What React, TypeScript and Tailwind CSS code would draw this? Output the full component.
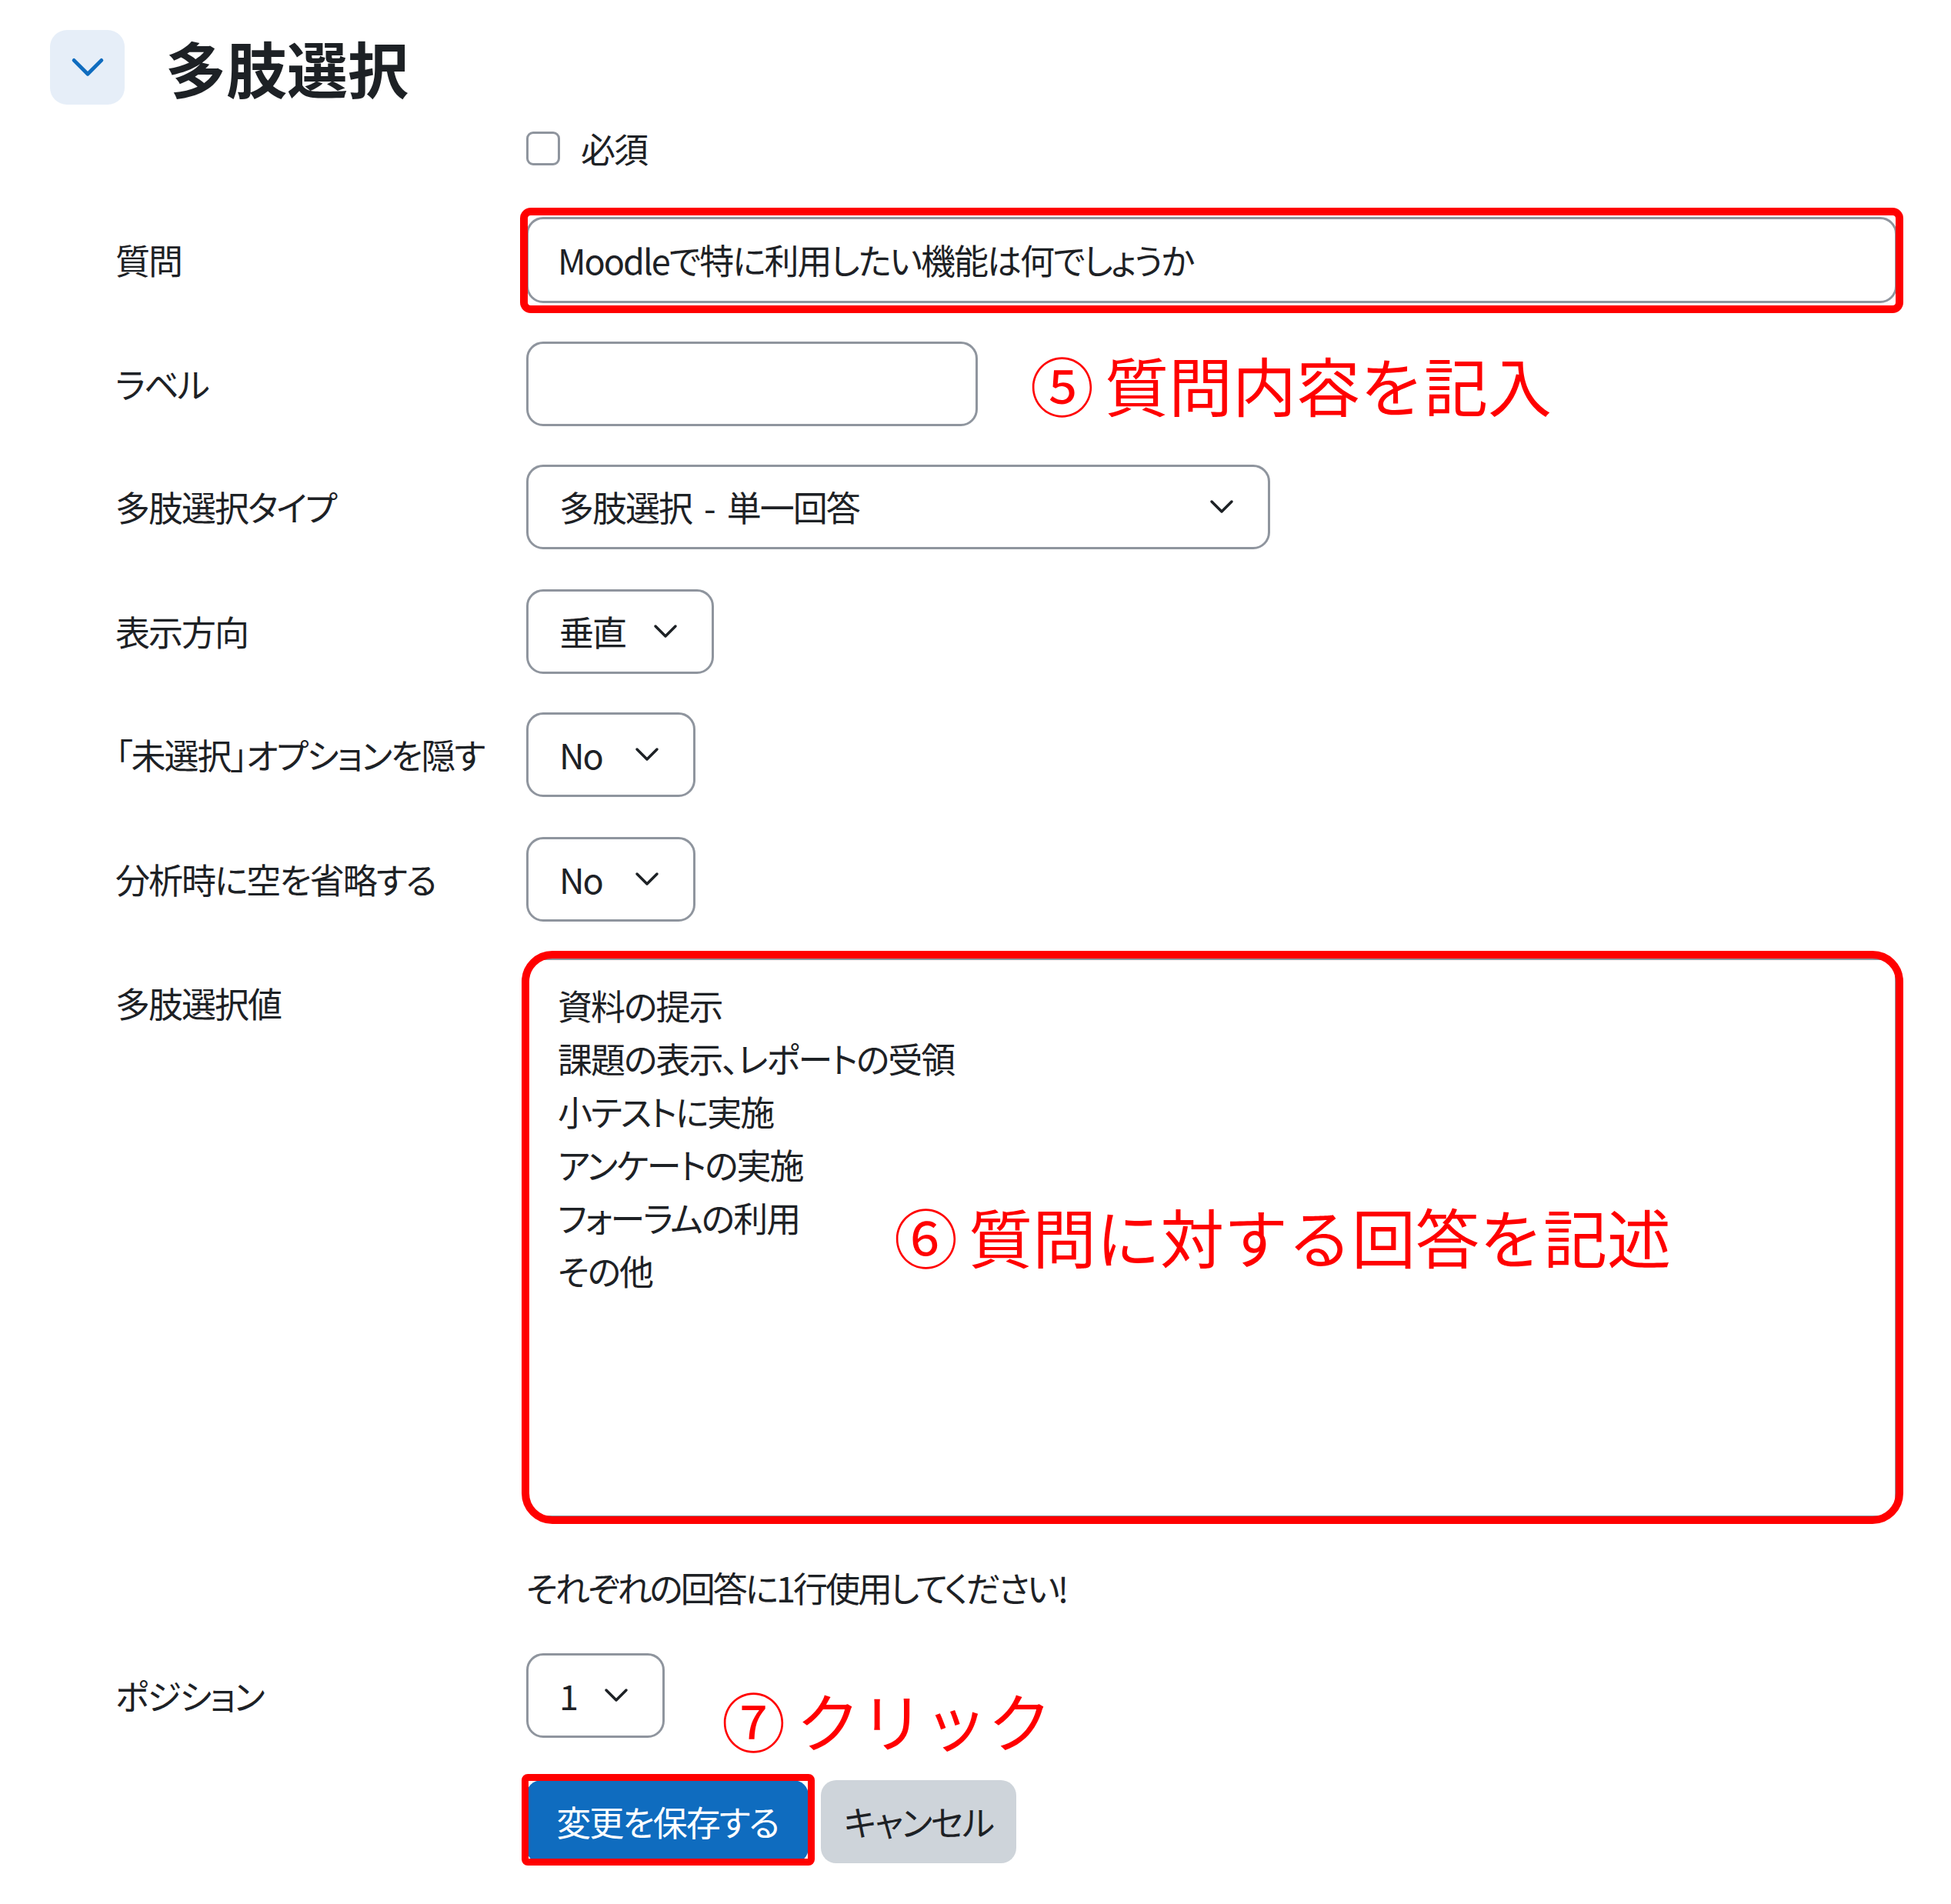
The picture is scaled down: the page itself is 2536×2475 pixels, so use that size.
import type { ReactNode } from "react";

function Chevron({ className }: { className?: string }) {
  return (
    <svg
      viewBox="0 0 32 20"
      className={className}
      fill="none"
      stroke="currentColor"
      strokeWidth={3.5}
      strokeLinecap="round"
      strokeLinejoin="round"
    >
      <polyline points="3,3 16,16 29,3" />
    </svg>
  );
}

function Select({ value, width }: { value: ReactNode; width: string }) {
  return (
    <div
      className={`flex h-[110px] ${width} items-center rounded-[22px] border-[3px] border-[#8f959e] bg-white pl-[40px] pr-[44px]`}
    >
      <span>{value}</span>
      <Chevron className="ml-auto h-[20px] w-[32px] text-[#1d2125]" />
    </div>
  );
}

function Row({
  label,
  children,
  className = "",
}: {
  label: string;
  children: ReactNode;
  className?: string;
}) {
  return (
    <div className={`grid grid-cols-[534px_1fr] items-center ${className}`}>
      <div>{label}</div>
      <div className="flex items-center">{children}</div>
    </div>
  );
}

const choices = [
  "資料の提示",
  "課題の表示、レポートの受領",
  "小テストに実施",
  "アンケートの実施",
  "フォーラムの利用",
  "その他",
];

function App() {
  return (
    <main className="min-h-screen w-full bg-white pb-[40px] font-['Noto_Sans_CJK_JP',sans-serif] text-[45px] tracking-[-2px] text-[#1d2125] [font-feature-settings:'palt']">
      {/* header */}
      <div className="flex items-center pl-[65px] pt-[39px]">
        <button className="flex h-[97px] w-[97px] items-center justify-center rounded-[22px] bg-[#e6eef8]">
          <Chevron className="h-[28px] w-[44px] text-[#0f6cbf]" />
        </button>
        <h2 className="ml-[53px] text-[79px] font-bold leading-none tracking-normal">多肢選択</h2>
      </div>

      <div className="flex flex-col pl-[150px] pr-[70px]">
        <div className="mt-[34px] flex items-center pl-[534px]">
          <span className="h-[44px] w-[44px] rounded-[9px] border-[3px] border-[#8f959e] bg-white" />
          <span className="ml-[27px] leading-none">必須</span>
        </div>

        <Row label="質問" className="mt-[67px]">
          <div className="relative w-full">
            <div className="flex h-[112px] w-full items-center rounded-[22px] border-[3px] border-[#8f959e] bg-white pl-[38px]">
              Moodleで特に利用したい機能は何でしょうか
            </div>
            <div className="absolute -bottom-[13px] -left-[8px] -right-[8px] -top-[12px] rounded-[14px] border-[10px] border-[#ff0000]" />
          </div>
        </Row>

        <Row label="ラベル" className="mt-[50px]">
          <div className="h-[110px] w-[587px] rounded-[22px] border-[3px] border-[#8f959e] bg-white" />
          <span className="ml-[68px] text-[83px] leading-none tracking-normal text-[#ff0000] [font-feature-settings:normal]">
            ⑤<span className="ml-[14px]">質問内容を記入</span>
          </span>
        </Row>

        <Row label="多肢選択タイプ" className="mt-[50px]">
          <Select
            value={
              <>
                多肢選択<span className="mx-[16px]">-</span>単一回答
              </>
            }
            width="w-[967px]"
          />
        </Row>

        <Row label="表示方向" className="mt-[52px]">
          <Select value="垂直" width="w-[244px]" />
        </Row>

        <Row label="「未選択」オプションを隠す" className="mt-[50px]">
          <Select value="No" width="w-[220px]" />
        </Row>

        <Row label="分析時に空を省略する" className="mt-[52px]">
          <Select value="No" width="w-[220px]" />
        </Row>

        <div className="mt-[47px] grid grid-cols-[534px_1fr] items-start">
          <div className="pt-[24px] leading-[69px]">多肢選択値</div>
          <div className="relative">
            <div className="h-[728px] w-full rounded-[22px] border-[3px] border-[#8f959e] bg-white pl-[38px] pt-[24px] leading-[69px]">
              {choices.map((c) => (
                <div key={c}>{c}</div>
              ))}
            </div>
            <div className="absolute -bottom-[8px] -left-[6px] -right-[8px] -top-[9px] rounded-[40px] border-[10px] border-[#ff0000]" />
            <div className="absolute left-[478px] top-[320px] text-[83px] leading-none tracking-normal text-[#ff0000] [font-feature-settings:normal]">
              ⑥<span className="ml-[14px]">質問に対する回答を記述</span>
            </div>
          </div>
        </div>

        <div className="mt-[56px] pl-[534px] leading-[69px] tracking-[-3px]">
          それぞれの回答に1行使用してください!
        </div>

        <Row label="ポジション" className="mt-[51px]">
          <Select value="1" width="w-[180px]" />
          <span className="-mb-[18px] ml-[74px] self-end text-[83px] leading-none tracking-normal text-[#ff0000] [font-feature-settings:normal]">
            ⑦<span className="ml-[14px]">クリック</span>
          </span>
        </Row>

        <div className="mt-[55px] flex items-center pl-[534px]">
          <div className="relative">
            <button className="flex h-[108px] w-[367px] items-center justify-center rounded-[20px] bg-[#0f6cbf] text-white">
              変更を保存する
            </button>
            <div className="absolute -bottom-[3px] -left-[6px] -right-[8px] -top-[8px] rounded-[8px] border-[9px] border-[#ff0000]" />
          </div>
          <button className="ml-[16px] flex h-[108px] w-[254px] items-center justify-center rounded-[20px] bg-[#ced4da]">
            キャンセル
          </button>
        </div>
      </div>
    </main>
  );
}

export default App;
